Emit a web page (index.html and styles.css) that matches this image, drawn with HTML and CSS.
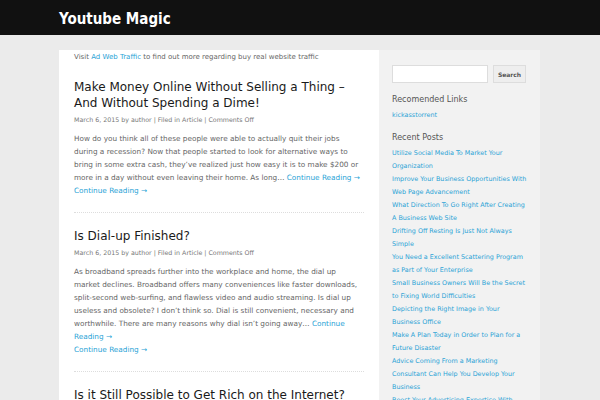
FILE: index.html
```html
<!DOCTYPE html>
<html lang="en">

<head>
    <meta charset="UTF-8">
    <title>Youtube Magic</title>
    <link rel="stylesheet" href="styles.css">
</head>

<body>
    <div class="header">
        <div class="wrap">
            <h1 class="site-title">Youtube Magic</h1>
        </div>
    </div>

    <div class="wrap page">
        <div class="content">
            <p class="promo">Visit <a href="#">Ad Web Traffic</a> to find out more regarding buy real website traffic</p>

            <div class="post">
                <h2 class="post-title">Make Money Online Without Selling a Thing &ndash; And Without Spending a Dime!</h2>
                <div class="meta">March 6, 2015 by author | Filed in Article | Comments Off</div>
                <p class="excerpt">How do you think all of these people were able to actually quit their jobs during a recession? Now that people started to look for alternative ways to bring in some extra cash, they&rsquo;ve realized just how easy it is to make $200 or more in a day without even leaving their home. As long&hellip; <a href="#">Continue Reading &rarr;</a></p>
                <a class="more" href="#">Continue Reading &rarr;</a>
            </div>

            <div class="post">
                <h2 class="post-title">Is Dial-up Finished?</h2>
                <div class="meta">March 6, 2015 by author | Filed in Article | Comments Off</div>
                <p class="excerpt">As broadband spreads further into the workplace and home, the dial up market declines. Broadband offers many conveniences like faster downloads, split-second web-surfing, and flawless video and audio streaming. Is dial up useless and obsolete? I don&rsquo;t think so. Dial is still convenient, necessary and worthwhile. There are many reasons why dial isn&rsquo;t going away&hellip; <a href="#">Continue Reading &rarr;</a></p>
                <a class="more" href="#">Continue Reading &rarr;</a>
            </div>

            <div class="post">
                <h2 class="post-title">Is it Still Possible to Get Rich on the Internet?</h2>
            </div>
        </div>

        <div class="sidebar">
            <form class="search">
                <input type="text" class="search-field">
                <button type="button" class="search-btn">Search</button>
            </form>

            <h3 class="widget-title">Recomended Links</h3>
            <ul class="links">
                <li><a href="#">kickasstorrent</a></li>
            </ul>

            <h3 class="widget-title">Recent Posts</h3>
            <ul class="links">
                <li><a href="#">Utilize Social Media To Market Your Organization</a></li>
                <li><a href="#">Improve Your Business Opportunities With Web Page Advancement</a></li>
                <li><a href="#">What Direction To Go Right After Creating A Business Web Site</a></li>
                <li><a href="#">Drifting Off Resting Is Just Not Always Simple</a></li>
                <li><a href="#">You Need a Excellent Scattering Program as Part of Your Enterprise</a></li>
                <li><a href="#">Small Business Owners Will Be the Secret to Fixing World Difficulties</a></li>
                <li><a href="#">Depicting the Right Image in Your Business Office</a></li>
                <li><a href="#">Make A Plan Today in Order to Plan for a Future Disaster</a></li>
                <li><a href="#">Advice Coming From a Marketing Consultant Can Help You Develop Your Business</a></li>
                <li><a href="#">Boost Your Advertising Expertise With Social Media</a></li>
            </ul>
        </div>
    </div>
</body>

</html>
```

FILE: styles.css
```css
body {
    margin: 0;
    background: #ebebeb;
    font-family: "DejaVu Sans", sans-serif;
    color: #666;
    overflow: hidden;
}

a {
    color: #2aa3d6;
    text-decoration: none;
}

.wrap {
    width: 481px;
    margin-left: 59px;
}

/* header */
.header {
    background: #111;
    height: 35px;
}

.site-title {
    margin: 0;
    color: #fff;
    font-family: "DejaVu Sans Condensed", "DejaVu Sans", sans-serif;
    font-size: 15px;
    line-height: 38px;
    font-weight: bold;
}

/* layout */
.page {
    display: flex;
    margin-top: 15px;
}

.content {
    width: 290px;
    background: #fff;
    padding: 0 15px;
}

.sidebar {
    width: 136px;
    background: #f2f2f2;
    padding: 15px 12px 15px 13px;
}

/* posts */
.promo {
    font-size: 7px;
    line-height: 13px;
    margin: 0;
    padding-top: 1px;
}

.post {
    padding: 15px 0;
    border-bottom: 1px dotted #ddd;
}

.post:last-child {
    border-bottom: 0;
}

.post-title {
    margin: 0;
    font-size: 12px;
    line-height: 16px;
    font-weight: normal;
    color: #1a1a1a;
}

.meta {
    font-size: 6.3px;
    line-height: 12px;
    margin: 3px 0 6px;
    color: #777;
}

.excerpt {
    font-size: 7.3px;
    line-height: 13px;
    margin: 0;
}

.more {
    display: block;
    font-size: 7.3px;
    line-height: 13px;
}

/* sidebar */
.search {
    display: flex;
    gap: 5px;
    margin: 0 0 10px;
}

.search-field {
    width: 96px;
    height: 18px;
    box-sizing: border-box;
    border: 1px solid #ddd;
    background: #fff;
    margin: 0;
    padding: 0;
}

.search-btn {
    width: 33px;
    height: 18px;
    box-sizing: border-box;
    border: 1px solid #ddd;
    background: #eee;
    color: #555;
    font-family: "DejaVu Sans", sans-serif;
    font-size: 6px;
    font-weight: bold;
    padding: 0;
}

.widget-title {
    margin: 0;
    font-size: 8px;
    line-height: 14px;
    font-weight: normal;
    color: #555;
}

.links {
    list-style: none;
    margin: 2px 0 9px;
    padding: 0;
    font-size: 6.4px;
    line-height: 13px;
}
```
